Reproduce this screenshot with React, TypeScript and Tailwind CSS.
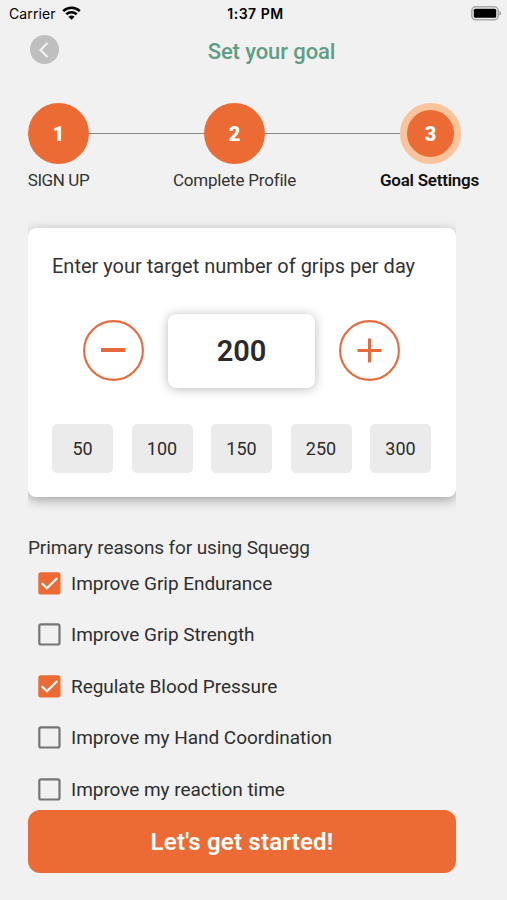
import { useState } from 'react';
import { clsx } from 'clsx';

const steps = [
  { number: '1', label: 'SIGN UP', labelClass: 'tracking-[-0.4px]', lineClass: '' },
  { number: '2', label: 'Complete Profile', labelClass: 'tracking-[-0.2px]', lineClass: 'w-[115px]' },
  { number: '3', label: 'Goal Settings', labelClass: 'tracking-[-0.25px] mr-0.5', lineClass: 'w-[135px]' },
];

const presets = [50, 100, 150, 250, 300];

const reasons = [
  'Improve Grip Endurance',
  'Improve Grip Strength',
  'Regulate Blood Pressure',
  'Improve my Hand Coordination',
  'Improve my reaction time',
];

function StatusBar() {
  return (
    <div className="grid h-7 grid-cols-3 items-center pl-[9px] pr-[5px] font-[Inter,sans-serif] text-sm text-black">
      <div className="flex items-center gap-1.5">
        <span className="tracking-[0.1px]">Carrier</span>
        <svg className="-mt-0.5" width="19" height="14" viewBox="0 0 19 14" fill="none" stroke="currentColor" strokeWidth="2.6">
          <path d="M1.2 5.1C5.9.7 13.1.7 17.8 5.1" />
          <path d="M4.3 8.3c3-2.7 7.4-2.7 10.4 0" />
          <path d="M9.5 13.8 6.4 10.7c1.8-1.6 4.4-1.6 6.2 0Z" fill="currentColor" stroke="none" />
        </svg>
      </div>
      <span className="text-center font-semibold tracking-[0.5px]">1:37 PM</span>
      <svg className="-mt-0.5 justify-self-end" width="31" height="15" viewBox="0 0 31 15">
        <rect x="0.8" y="0.8" width="26.4" height="13" rx="4" fill="#efefef" stroke="#a9a9a9" strokeWidth="1.6" />
        <rect x="2.8" y="2.8" width="22.4" height="9" rx="1.5" fill="#000" />
        <path d="M28.3 5v4.6c2.6-.8 2.6-3.8 0-4.6Z" fill="#a9a9a9" />
      </svg>
    </div>
  );
}

function Header() {
  return (
    <header className="grid grid-cols-[1fr_auto_1fr] items-start pt-[7px]">
      <button
        aria-label="Back"
        className="ml-[30px] flex size-[29px] items-center justify-center rounded-full bg-[#bfbfbf]"
      >
        <svg className="mr-0.5" width="10" height="16" viewBox="0 0 10 16" fill="none" stroke="#f4f4f4" strokeWidth="2">
          <path d="M8.5 1 1.5 8l7 7" />
        </svg>
      </button>
      <h1 className="ml-9 mt-px text-[22px] leading-8 font-medium tracking-[-0.1px] text-[#5f9e85]">Set your goal</h1>
      <span />
    </header>
  );
}

function Stepper({ current }: { current: number }) {
  return (
    <div className="mt-[35px] flex items-start">
      {steps.map((step, index) => {
        const isCurrent = index === current;

        return (
          <div key={step.number} className="flex items-start">
            {index > 0 && <div className={clsx('mt-[30px] h-px bg-[#828b86]', step.lineClass)} />}
            <div className="flex w-[61px] flex-col items-center">
              <div
                className={clsx(
                  'flex size-[61px] items-center justify-center rounded-full bg-[#ec6b34] text-xl font-black text-white',
                  isCurrent && 'border-[7px] border-[#f9c49c]'
                )}
              >
                {step.number}
              </div>
              <span
                className={clsx(
                  'mt-1 text-[17px] leading-6 whitespace-nowrap',
                  step.labelClass,
                  isCurrent ? 'font-semibold text-[#111]' : 'text-[#333]'
                )}
              >
                {step.label}
              </span>
            </div>
          </div>
        );
      })}
    </div>
  );
}

function RoundButton({ label, onClick, children }: { label: string; onClick: () => void; children: React.ReactNode }) {
  return (
    <button aria-label={label} onClick={onClick} className="-mt-px text-[#e66a3b]">
      <svg width="61" height="61" viewBox="0 0 61 61" fill="none" stroke="currentColor">
        <circle cx="30.5" cy="30.5" r="29.4" strokeWidth="2.1" />
        {children}
      </svg>
    </button>
  );
}

function GoalCard() {
  const [grips, setGrips] = useState(200);

  return (
    <div className="mt-9 w-[428px] overflow-x-clip">
      <section className="h-[269px] rounded-lg bg-white px-6 pt-6 shadow-[0_3px_12px_rgba(0,0,0,0.34)]">
        <h2 className="text-[20px] leading-7 whitespace-nowrap text-[#333]">Enter your target number of grips per day</h2>

        <div className="mt-[34px] flex items-center justify-between pl-[31px] pr-[32px]">
          <RoundButton label="Decrease" onClick={() => setGrips(Math.max(0, grips - 10))}>
            <path d="M18 30h24.5" strokeWidth="4" />
          </RoundButton>
          <div className="flex h-[74px] w-[147px] items-center justify-center rounded-lg bg-white pt-0.5 text-[29px] font-semibold text-[#2a2a2a] shadow-[0_1px_11px_rgba(0,0,0,0.28)]">
            {grips}
          </div>
          <RoundButton label="Increase" onClick={() => setGrips(grips + 10)}>
            <path d="M18.5 30.5h24M30.5 18.5v24" strokeWidth="3" />
          </RoundButton>
        </div>

        <div className="mr-px mt-9 flex justify-between">
          {presets.map((preset) => (
            <button
              key={preset}
              onClick={() => setGrips(preset)}
              className="h-[49px] w-[61px] rounded-[5px] bg-[#ebebeb] text-[18px] text-[#2b2b2b]"
            >
              {preset}
            </button>
          ))}
        </div>
      </section>
    </div>
  );
}

function Reasons() {
  const [checked, setChecked] = useState([0, 2]);

  const toggle = (index: number) => {
    setChecked(checked.includes(index) ? checked.filter((i) => i !== index) : [...checked, index]);
  };

  return (
    <section className="mt-[37px]">
      <h2 className="text-[19px] leading-7 tracking-[-0.13px] text-[#333]">Primary reasons for using Squegg</h2>
      <ul className="-mt-[3px]">
        {reasons.map((reason, index) => {
          const isChecked = checked.includes(index);

          return (
            <li key={reason} className="h-[51.4px] pl-2.5">
              <button
                role="checkbox"
                aria-checked={isChecked}
                onClick={() => toggle(index)}
                className="flex h-[51.4px] items-start gap-2.5 pt-[13px] text-[19px] text-[#2e2e2e]"
              >
                <svg width="23" height="23" viewBox="0 0 23 23" fill="none">
                  {isChecked ? (
                    <>
                      <rect x="0.3" y="0.3" width="22.2" height="22.2" rx="2.5" fill="#ec6b34" />
                      <path d="m3.8 11.2 5.1 5.1L19.3 6" stroke="#fff" strokeWidth="2.2" />
                    </>
                  ) : (
                    <rect x="1.3" y="1.3" width="20.2" height="20.2" rx="1.8" stroke="#757575" strokeWidth="2.2" />
                  )}
                </svg>
                <span className="leading-[23px] tracking-[-0.04px]">{reason}</span>
              </button>
            </li>
          );
        })}
      </ul>
    </section>
  );
}

export default function App() {
  return (
    <div className="h-[900px] w-[507px] overflow-hidden bg-[#f1f1f1] font-[Roboto,sans-serif]">
      <StatusBar />
      <Header />
      <main className="pl-7">
        <Stepper current={2} />
        <GoalCard />
        <Reasons />
        <button className="-mt-1.5 h-[63px] w-[428px] rounded-xl bg-[#ec6b34] pt-0.5 text-[24px] font-semibold tracking-[0.2px] text-white">
          Let's get started!
        </button>
      </main>
    </div>
  );
}
